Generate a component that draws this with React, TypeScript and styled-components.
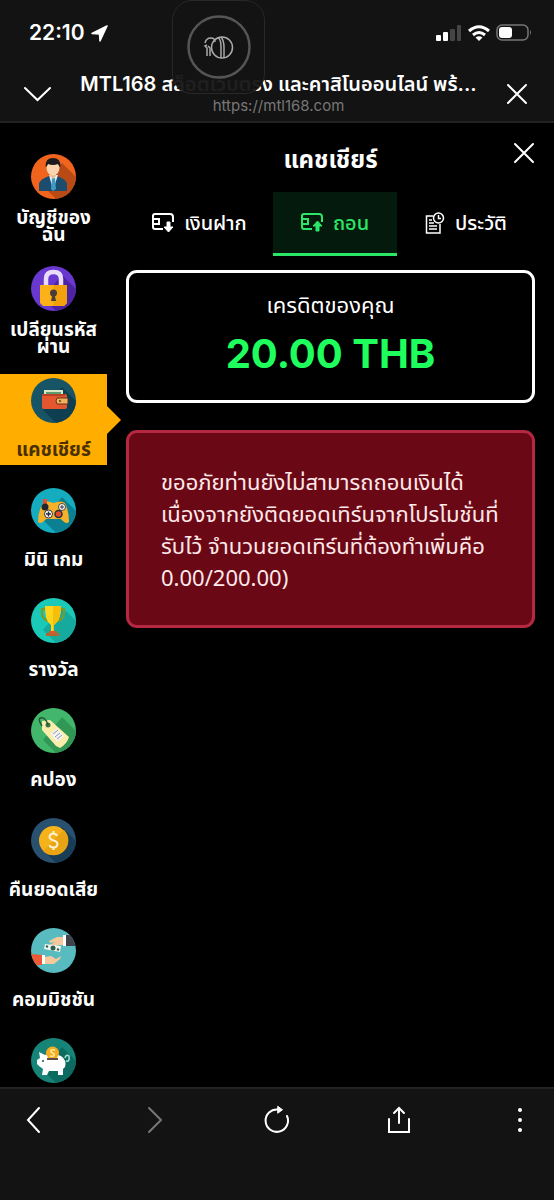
import React from "react";
import styled, { createGlobalStyle } from "styled-components";

const GlobalStyle = createGlobalStyle`
  * { box-sizing: border-box; }
  body { margin: 0; background: #000; }
  button { font: inherit; color: inherit; background: none; border: 0; padding: 0; cursor: pointer; }
  svg { display: block; flex: none; }
`;

const Screen = styled.div`
  display: flex;
  flex-direction: column;
  height: 100vh;
  overflow: hidden;
  color: #fff;
  background: #000;
  font-family: Inter, "Noto Sans Thai", "Noto Sans", sans-serif;
`;

const Header = styled.header`
  position: relative;
  flex: none;
  background: #131313;
  border-bottom: 2px solid #232323;
`;

const StatusBar = styled.div`
  display: flex;
  justify-content: space-between;
  align-items: center;
  height: 66px;
  padding: 0 22px 0 29px;
`;

const StatusGroup = styled.div`
  display: flex;
  align-items: center;
  gap: 6px;
`;

const Clock = styled.time`
  font-size: 21px;
  line-height: 24px;
  font-weight: 600;
`;

const AddressBar = styled.div`
  display: flex;
  align-items: center;
  justify-content: space-between;
  height: 55px;
  padding: 0 26px 0 24px;
`;

const PageInfo = styled.div`
  flex: 1;
  min-width: 0;
  padding-bottom: 2px;
  text-align: center;
`;

const PageTitle = styled.div`
  font-size: 20px;
  line-height: 26px;
  font-weight: 600;
  white-space: nowrap;
`;

const PageUrl = styled.div`
  font-size: 15px;
  line-height: 18px;
  color: #777;
`;

const IconButton = styled.button`
  flex: none;
  display: flex;
`;

const FloatingBadge = styled.div`
  position: absolute;
  top: 0;
  left: 172px;
  width: 93px;
  height: 94px;
  display: flex;
  align-items: center;
  justify-content: center;
  border: 1px solid #282828;
  border-radius: 20px;
  background: rgba(19, 19, 19, 0.95);
`;

const Main = styled.main`
  flex: 1;
  min-height: 0;
  display: flex;
`;

const Sidebar = styled.nav`
  flex: none;
  width: 107px;
  display: flex;
  flex-direction: column;
  gap: 19px;
  padding-top: 27px;
`;

const SideButton = styled.button<{ $active?: boolean }>`
  position: relative;
  flex: none;
  display: flex;
  flex-direction: column;
  align-items: center;
  padding-top: 4px;
  font-size: 19px;
  line-height: 17px;
  font-weight: 700;
  color: ${(p) => (p.$active ? "#4a3000" : "#fff")};
  background: ${(p) => (p.$active ? "#ffae00" : "transparent")};

  &::after {
    content: "";
    display: ${(p) => (p.$active ? "block" : "none")};
    position: absolute;
    top: 32px;
    left: 100%;
    border: 14px solid transparent;
    border-left-color: #ffae00;
    border-right-width: 0;
  }
`;

const SideLabel = styled.span`
  display: flex;
  flex-direction: column;
  justify-content: center;
  min-height: 42px;
  padding-top: 10px;
  white-space: nowrap;
`;

const Cashier = styled.section`
  flex: 1;
  min-width: 0;
  padding: 0 19px;
`;

const CashierHeader = styled.div`
  position: relative;
  height: 69px;
  padding-top: 21px;
`;

const Title = styled.h1`
  margin: 0;
  font-size: 24px;
  line-height: 32px;
  font-weight: 700;
  text-align: center;
`;

const CloseButton = styled(IconButton)`
  position: absolute;
  top: 19px;
  right: 0;
`;

const Tabs = styled.div`
  display: grid;
  grid-template-columns: 147fr 124fr 138fr;
`;

const Tab = styled.button<{ $active?: boolean }>`
  display: flex;
  align-items: center;
  justify-content: center;
  gap: 10px;
  height: 64px;
  border-bottom: 3px solid ${(p) => (p.$active ? "#2ce668" : "transparent")};
  font-size: 20px;
  line-height: 24px;
  font-weight: 500;
  color: ${(p) => (p.$active ? "#2ce668" : "#fff")};
  background: ${(p) => (p.$active ? "#031a0c" : "transparent")};
`;

const Panel = styled.div<{ $danger?: boolean }>`
  border: 3px solid ${(p) => (p.$danger ? "#b52841" : "#fff")};
  border-radius: 11px;
  background: ${(p) => (p.$danger ? "#6b0815" : "#000")};
`;

const CreditPanel = styled(Panel)`
  margin: 14px 0 27px;
  padding: 16px 0 18px;
  text-align: center;
`;

const CreditLabel = styled.div`
  font-size: 22px;
  line-height: 32px;
`;

const CreditAmount = styled.div`
  margin-top: 5px;
  font-size: 40px;
  line-height: 56px;
  font-weight: 700;
  color: #1eff5e;
`;

const ErrorPanel = styled(Panel)`
  padding: 32px;
`;

const ErrorText = styled.p`
  margin: 0;
  font-family: "Noto Sans", "Noto Sans Thai", sans-serif;
  font-size: 22px;
  line-height: 32px;
  color: #ffe9ea;
  white-space: nowrap;
`;

const BottomBar = styled.nav`
  flex: none;
  display: flex;
  align-items: flex-start;
  justify-content: space-between;
  height: 113px;
  padding: 16px 18px 0;
  border-top: 2px solid #232323;
  background: #131313;
`;

const Disc = ({ bg, shade, children }: { bg: string; shade: string; children: React.ReactNode }) => {
  const id = "disc" + bg.slice(1);
  return (
    <svg width="45" height="45" viewBox="0 0 45 45">
      <clipPath id={id}><circle cx="22.500" cy="22.500" r="22.500" /></clipPath>
      <g clipPath={`url(#${id})`}>
        <rect width="45" height="45" fill={bg} />
        <path d="M31 9 L45 23 V45 H25 L12 32Z" fill={shade} />
        {children}
      </g>
    </svg>
  );
};

const AccountIcon = () => (
  <Disc bg="#f0641e" shade="#b84a15">
    <path d="M8 37 V30 Q9 25 18 22 H26 Q35 25 36 30 V37Z" fill="#1c4c6e" />
    <path d="M18 21 L22 36 L27 21Z" fill="#e8f3f8" />
    <path d="M21 24 H24 L25 35 L22 37 L20 35Z" fill="#3e9bc4" />
    <path d="M19 17 H25 V22 L22 25 L19 22Z" fill="#eebd94" />
    <ellipse cx="22" cy="14" rx="6.500" ry="7.500" fill="#fbd5b0" />
    <path d="M14.500 13 Q14 4 22 4 Q30 4 29.500 13 Q28 13 27 10 Q22 12 17 10 Q16 13 14.500 13Z" fill="#1c1a1d" />
  </Disc>
);

const LockIcon = () => (
  <Disc bg="#6938cf" shade="#4c24a3">
    <path d="M15 20 V13 Q15 6 22.500 6 Q30 6 30 13 V20" fill="none" stroke="#e9dcfb" strokeWidth="4.500" />
    <path d="M9 19 H36 V37 L33 40 H12 L9 37Z" fill="#fbb117" />
    <path d="M22.500 19 H36 V37 L33 40 H22.500Z" fill="#f3a00d" />
    <circle cx="22.500" cy="27" r="3.500" fill="#493d3b" />
    <path d="M21.500 28 H23.500 L25 35 H20Z" fill="#493d3b" />
  </Disc>
);

const WalletIcon = () => (
  <Disc bg="#175466" shade="#0e3f50">
    <path d="M13 12 H32 V19 H13Z" fill="#d9e7c5" />
    <path d="M15 14 H30 V18 H15Z" fill="#5b9d70" />
    <path d="M11 16 H34 Q36 16 36 18 V29 Q36 31 34 31 H13 Q11 31 11 29Z" fill="#e4572e" />
    <path d="M11 16 H34 V18 H11Z" fill="#ba3f23" />
    <path d="M26 20 H37 V26 H26 L25 23Z" fill="#f3b05a" stroke="#5f3023" />
    <circle cx="29" cy="23" r="1" fill="#5f3023" />
  </Disc>
);

const GamepadIcon = () => (
  <Disc bg="#15acc0" shade="#0b8093">
    <path d="M12 15 Q16 12 22.500 15 Q30 12 34 15 Q38 23 38 34 Q35 37 30 31 H15 Q10 37 7 34 Q7 23 12 15Z" fill="#f6b12b" />
    <path d="M14 16 V11" stroke="#e55130" strokeWidth="4" />
    <circle cx="14" cy="19" r="3.500" fill="#202733" />
    <circle cx="31" cy="19" r="3.500" fill="#fff" stroke="#45423e" />
    <path d="M29 19 H33 M31 17 V21" stroke="#253442" />
    <circle cx="17.500" cy="26" r="4" fill="#fff" stroke="#334" />
    <path d="M15 26 H20 M17.500 23.500 V28.500" stroke="#252d36" strokeWidth="1.500" />
    <circle cx="27.500" cy="26" r="3.500" fill="#e34b28" stroke="#2c313a" strokeWidth="1.500" />
  </Disc>
);

const TrophyIcon = () => (
  <Disc bg="#1bc9b8" shade="#16a99e">
    <path d="M14 11 H11 V16 Q12 22 18 23 M29 11 H33 V16 Q32 22 26 23" fill="none" stroke="#7b9c26" strokeWidth="2" />
    <path d="M14 8 H30 Q30 20 26 24 L23 27 V34 H20 V27 L17 24 Q14 19 14 8Z" fill="#ffd51e" />
    <path d="M22 8 H30 Q30 20 26 24 L23 27 V34 H22Z" fill="#f5be0a" />
    <path d="M19 33 H25 L28 38 H15Z" fill="#d6592e" />
    <path d="M15 35 H28 V38 H15Z" fill="#b8642d" />
  </Disc>
);

const CouponIcon = () => (
  <Disc bg="#42b66a" shade="#319754">
    <path d="M11 13 L19 12 L38 29 Q36 36 29 40 L25 38 L11 22Z" fill="#faedab" />
    <circle cx="17" cy="17" r="2.500" fill="#3c754c" />
    <path d="M17 17 Q14 8 9 10 Q7 12 11 18" fill="none" stroke="#265838" strokeWidth="1.500" />
    <path d="M20 26 L26 20 L33 28 L26 34Z" fill="#f4f5ef" />
    <path d="M22 26 L27 22 M24 29 L29 25 M26 31 L31 27" stroke="#8994ba" />
  </Disc>
);

const CoinIcon = () => (
  <Disc bg="#28506f" shade="#193c57">
    <circle cx="22.500" cy="22.500" r="14.500" fill="#f6b21b" />
    <path d="M33 12 A14.500 14.500 0 0 1 12 33Z" fill="#e9a414" />
    <path d="M26 18 Q25 15.500 22 15.500 Q18.500 16 18.500 19 Q19 21.500 22.500 22.500 Q26.500 23.500 26.500 26 Q26 29.500 22.500 29.500 Q19 29.500 18.500 27 M22.500 13 V16 M22.500 29 V32" fill="none" stroke="#fff1cd" strokeWidth="2" />
  </Disc>
);

const CommissionIcon = () => (
  <svg width="45" height="45" viewBox="0 0 45 45">
    <clipPath id="commission"><circle cx="22.500" cy="22.500" r="22.500" /></clipPath>
    <g clipPath="url(#commission)">
      <rect width="45" height="45" fill="#57bbc0" />
      <path d="M34 7 H45 V18 H34Z" fill="#40434e" />
      <path d="M32 7 H35 V18 H32Z" fill="#fff" />
      <path d="M32 9 H26 L18 13 L19 15 L24 14 L17 18 L19 20 L27 17 H32Z" fill="#f6c99d" />
      <path d="M14 16 L30 18 L29 24 L13 21Z" fill="#eff7eb" />
      <circle cx="22" cy="20" r="2.500" fill="#315e55" />
      <path d="M15 18 L17 19 M26 21 L28 22" stroke="#315e55" strokeWidth="2" />
      <path d="M0 26 L11 27 V37 H0Z" fill="#ed5935" />
      <path d="M11 27 H14 V36 H11Z" fill="#fff" />
      <path d="M14 29 L20 28 L25 31 L30 28 L29 31 L23 36 H14Z" fill="#f6c99d" />
    </g>
  </svg>
);

const PiggyIcon = () => (
  <Disc bg="#168477" shade="#0c6a60">
    <path d="M35 23 Q39 24 38 18 Q35 16 34 20" fill="none" stroke="#9ee0d5" strokeWidth="1.500" />
    <path d="M8 14 L14 17 Q21 14 30 18 Q36 22 34 29 L32 31 V37 H27 V33 H18 L16 37 H11 L12 31 L8 28 L6 26 V22 L9 20Z" fill="#fff" />
    <circle cx="12" cy="23" r="1" fill="#254" />
    <circle cx="21.500" cy="15" r="6.500" fill="#f7ad21" />
    <path d="M24 12 Q19 11 20 14 L23 16 Q24 19 19 18" fill="none" stroke="#fff0a4" strokeWidth="1.500" />
    <path d="M16 21 H27" stroke="#624b43" strokeWidth="2" />
  </Disc>
);

const CardTransferIcon = ({ up }: { up?: boolean }) => (
  <svg width="22" height="20" viewBox="0 0 22 20" fill="none" stroke="currentColor" strokeWidth="2">
    <path d="M11 16 H3 Q1 16 1 14 V3 Q1 1 3 1 H18 Q21 1 21 4 V9" />
    <path d="M1 6 H7 V11 H1" />
    {up ? (
      <path d="M16.500 8 L21 13 H18 V18 H15 V13 H12Z" fill="currentColor" strokeWidth="1" />
    ) : (
      <path d="M16.500 19 L21 14 H18 V9 H15 V14 H12Z" fill="currentColor" strokeWidth="1" />
    )}
  </svg>
);

const HistoryIcon = () => (
  <svg width="20" height="22" viewBox="0 0 20 22" fill="none" stroke="currentColor" strokeWidth="1.500">
    <path d="M8 4 H1.500 V21 H15 V12" />
    <circle cx="13.500" cy="6" r="5" />
    <path d="M13.500 3 V6.500 H16 M4 8 H7 M4 11 H9 M4 14 H12 M4 17 H12" />
  </svg>
);

const CloseIcon = () => (
  <svg width="22" height="22" viewBox="0 0 22 22" stroke="#fff" strokeWidth="2" strokeLinecap="round">
    <path d="M2 2 L20 20 M20 2 L2 20" />
  </svg>
);

const sideItems = [
  { lines: ["บัญชีของ", "ฉัน"], Icon: AccountIcon },
  { lines: ["เปลียนรหัส", "ผ่าน"], Icon: LockIcon },
  { lines: ["แคชเชียร์"], Icon: WalletIcon, active: true },
  { lines: ["มินิ เกม"], Icon: GamepadIcon },
  { lines: ["รางวัล"], Icon: TrophyIcon },
  { lines: ["คปอง"], Icon: CouponIcon },
  { lines: ["คืนยอดเสีย"], Icon: CoinIcon },
  { lines: ["คอมมิชชัน"], Icon: CommissionIcon },
  { lines: [], Icon: PiggyIcon },
];

export default function App() {
  return (
    <Screen>
      <GlobalStyle />
      <Header>
        <StatusBar>
          <StatusGroup>
            <Clock>22:10</Clock>
            <svg width="17" height="17" viewBox="0 0 17 17">
              <path d="M16 1 L1 8.500 L8.500 9 L9 16Z" fill="#fff" stroke="#fff" strokeWidth="1.500" strokeLinejoin="round" />
            </svg>
          </StatusGroup>
          <StatusGroup>
            <svg width="26" height="17" viewBox="0 0 26 17">
              <rect x="0" y="10" width="5" height="6" rx="1" fill="#fff" />
              <rect x="7" y="7" width="5" height="9" rx="1" fill="#fff" />
              <rect x="14" y="4" width="5" height="12" rx="1" fill="#454545" />
              <rect x="21" y="0" width="4" height="16" rx="1" fill="#454545" />
            </svg>
            <svg width="22" height="17" viewBox="0 0 22 17" fill="none" stroke="#fff" strokeWidth="3">
              <path d="M1 6 Q11 -2.500 21 6 M5 10 Q11 5 17 10" />
              <path d="M11 16 L7.500 12.500 Q11 10 14.500 12.500Z" fill="#fff" stroke="none" />
            </svg>
            <svg width="36" height="18" viewBox="0 0 36 18">
              <rect x="1" y="1" width="31" height="15" rx="5" fill="none" stroke="#777" strokeWidth="1.500" />
              <rect x="3" y="3" width="13" height="11" rx="3" fill="#fff" />
              <path d="M34 6 Q36 8.500 34 11Z" fill="#777" />
            </svg>
          </StatusGroup>
        </StatusBar>
        <AddressBar>
          <IconButton aria-label="ย่อ">
            <svg width="27" height="16" viewBox="0 0 27 16" fill="none" stroke="#fff" strokeWidth="2" strokeLinecap="round">
              <path d="M1 2 L13.500 14 L26 2" />
            </svg>
          </IconButton>
          <PageInfo>
            <PageTitle>MTL168 สล็อตเว็บตรง และคาสิโนออนไลน์ พร้...</PageTitle>
            <PageUrl>https://mtl168.com</PageUrl>
          </PageInfo>
          <IconButton aria-label="ปิดหน้า"><CloseIcon /></IconButton>
        </AddressBar>
        <FloatingBadge>
          <svg width="64" height="64" viewBox="0 0 64 64" fill="none">
            <circle cx="32" cy="32" r="30.500" stroke="#555" strokeWidth="2.500" />
            <g stroke="#aaa" strokeWidth="1.500">
              <circle cx="35" cy="32.500" r="10.500" />
              <path d="M20 41 V33 L18 31 L20 30 M18 28 Q19 23 24 23 Q28 23 28 27 M23 41 V33 L21 31 M31 22.500 Q34 25 34 31 V43 M34 22 Q37 26 37 32 V43" />
            </g>
          </svg>
        </FloatingBadge>
      </Header>

      <Main>
        <Sidebar>
          {sideItems.map(({ lines, Icon, active }, i) => (
            <SideButton key={i} $active={active} aria-label={lines.length ? undefined : "ออมเงิน"}>
              <Icon />
              <SideLabel>
                {lines.map((line) => <span key={line}>{line}</span>)}
              </SideLabel>
            </SideButton>
          ))}
        </Sidebar>

        <Cashier>
          <CashierHeader>
            <Title>แคชเชียร์</Title>
            <CloseButton aria-label="ปิด"><CloseIcon /></CloseButton>
          </CashierHeader>
          <Tabs role="tablist">
            <Tab role="tab"><CardTransferIcon />เงินฝาก</Tab>
            <Tab role="tab" aria-selected $active><CardTransferIcon up />ถอน</Tab>
            <Tab role="tab"><HistoryIcon />ประวัติ</Tab>
          </Tabs>
          <CreditPanel>
            <CreditLabel>เครดิตของคุณ</CreditLabel>
            <CreditAmount>20.00 THB</CreditAmount>
          </CreditPanel>
          <ErrorPanel $danger role="alert">
            <ErrorText>
              ขออภัยท่านยังไม่สามารถถอนเงินได้<br />
              เนื่องจากยังติดยอดเทิร์นจากโปรโมชั่นที่<br />
              รับไว้ จำนวนยอดเทิร์นที่ต้องทำเพิ่มคือ<br />
              0.00/200.00)
            </ErrorText>
          </ErrorPanel>
        </Cashier>
      </Main>

      <BottomBar>
        <IconButton aria-label="ย้อนกลับ">
          <svg width="32" height="32" viewBox="0 0 32 32" fill="none" stroke="#fff" strokeWidth="2" strokeLinecap="round">
            <path d="M21 3 L10 15 L21 27" />
          </svg>
        </IconButton>
        <IconButton aria-label="ไปข้างหน้า">
          <svg width="32" height="32" viewBox="0 0 32 32" fill="none" stroke="#777" strokeWidth="2" strokeLinecap="round">
            <path d="M9 3 L21 15 L9 27" />
          </svg>
        </IconButton>
        <IconButton aria-label="โหลดใหม่">
          <svg width="32" height="32" viewBox="0 0 32 32" fill="none" stroke="#fff" strokeWidth="2" strokeLinecap="round">
            <path d="M17 4.500 A11.200 11.200 0 1 0 26 11" />
            <path d="M17 1.500 L21.500 4.800 L17 8Z" fill="#fff" strokeWidth="1" />
          </svg>
        </IconButton>
        <IconButton aria-label="แชร์">
          <svg width="32" height="32" viewBox="0 0 32 32" fill="none" stroke="#fff" strokeWidth="2" strokeLinecap="round">
            <path d="M6 14 V27 H26 V14 M16 18 V3 M11 8 L16 3 L21 8" />
          </svg>
        </IconButton>
        <IconButton aria-label="เมนู">
          <svg width="32" height="32" viewBox="0 0 32 32" fill="#fff">
            <circle cx="16" cy="5" r="2" /><circle cx="16" cy="15" r="2" /><circle cx="16" cy="25" r="2" />
          </svg>
        </IconButton>
      </BottomBar>
    </Screen>
  );
}
